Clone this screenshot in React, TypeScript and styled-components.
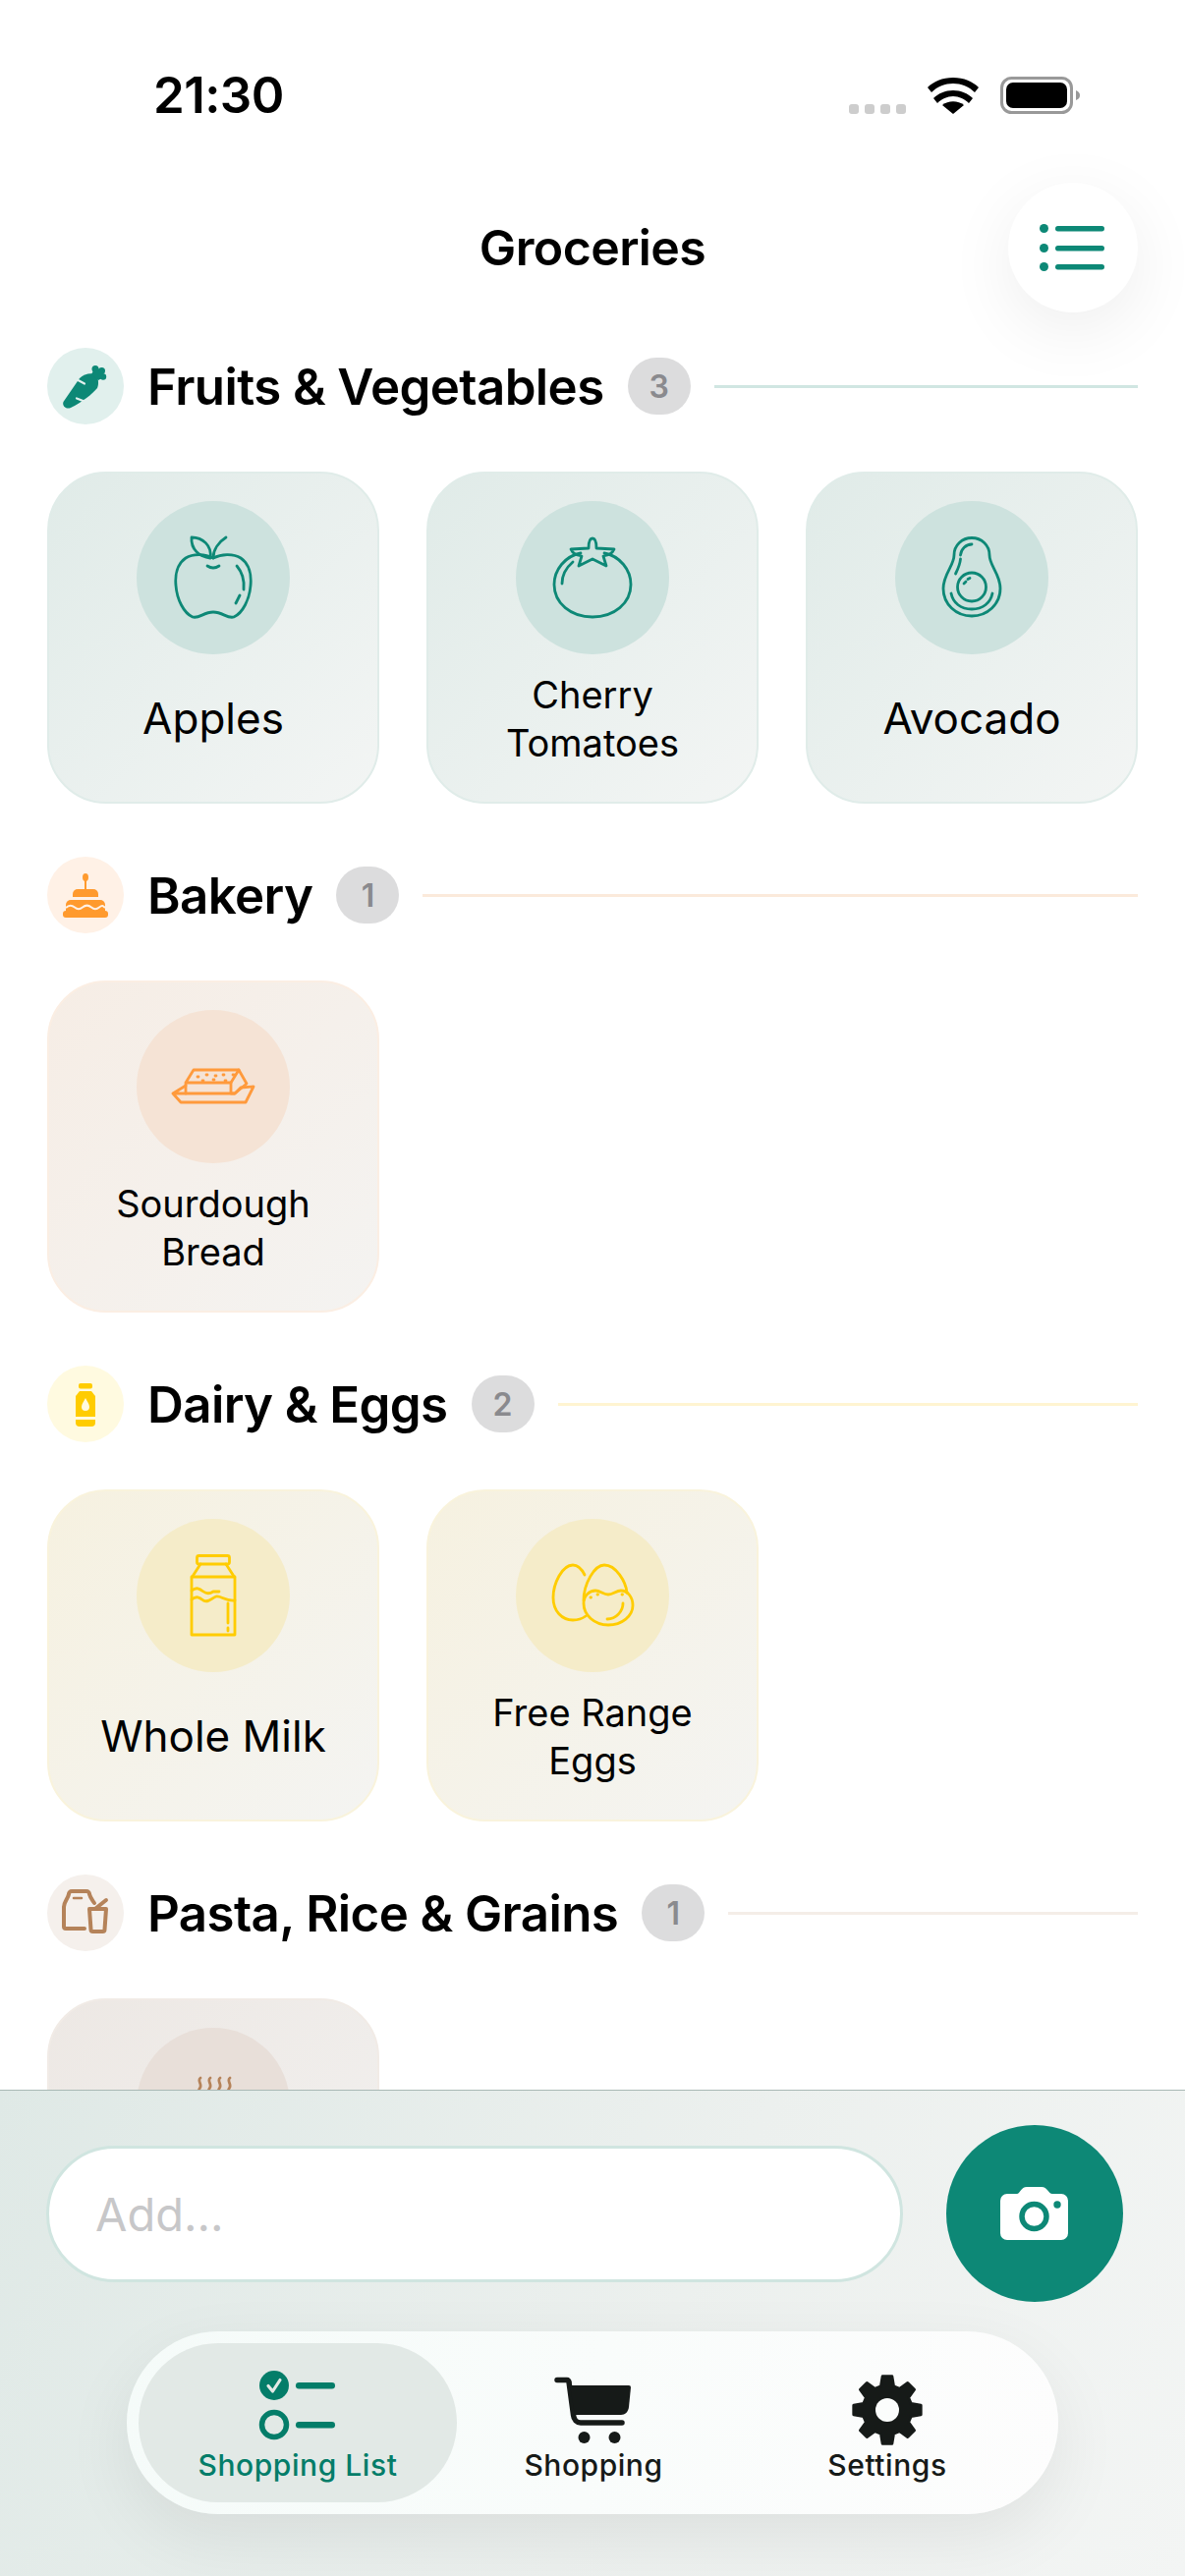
import React from "react";
import styled, { createGlobalStyle } from "styled-components";

const TEAL = "#0d8876";

const Global = createGlobalStyle`
  html, body { margin: 0; padding: 0; background: #fff; }
  body { width: 1206px; height: 2622px; overflow: hidden; font-family: Inter, "Liberation Sans", sans-serif; color: #000; }
  * { box-sizing: border-box; }
`;

const Page = styled.div`
  width: 1206px;
  height: 2622px;
  display: flex;
  flex-direction: column;
  overflow: hidden;
`;
const Scroll = styled.main`
  flex: 1;
  min-height: 0;
  overflow: hidden;
  padding: 0 48px;
`;
const StatusBar = styled.div`
  height: 186px;
  margin: 0 -48px;
  padding: 72px 106px 0 156px;
  display: flex;
  justify-content: space-between;
  align-items: flex-start;
`;
const Time = styled.div`
  font-size: 51px;
  line-height: 50px;
  font-weight: 600;
  letter-spacing: -0.6px;
`;
const StatusIcons = styled.div`
  display: flex;
  align-items: flex-end;
  height: 50px;
  padding-bottom: 6px;
  gap: 22px;
`;
const Dots = styled.div`
  display: flex;
  gap: 6px;
  align-self: flex-end;
`;
const Dot = styled.span`
  width: 10px;
  height: 10px;
  border-radius: 3px;
  background: #cdcdcd;
`;
const Header = styled.header`
  height: 132px;
  display: grid;
  grid-template-columns: 1fr auto 1fr;
  align-items: center;
  margin-bottom: 36px;
`;
const Title = styled.h1`
  grid-column: 2;
  margin: 0;
  font-size: 50px;
  font-weight: 600;
  letter-spacing: -0.6px;
`;
const MenuButton = styled.button`
  grid-column: 3;
  justify-self: end;
  width: 132px;
  height: 132px;
  padding: 0;
  border: 0;
  border-radius: 50%;
  background: #fff;
  box-shadow: 0 18px 70px rgba(0, 0, 0, 0.07);
  display: flex;
  align-items: center;
  justify-content: center;
`;
const Section = styled.section`
  margin-bottom: 54px;
`;
const SectionHead = styled.div`
  height: 78px;
  display: flex;
  align-items: center;
  gap: 24px;
  margin-bottom: 48px;
`;
const HeadIcon = styled.div<{ $bg: string }>`
  width: 78px;
  height: 78px;
  flex: none;
  border-radius: 50%;
  background: ${(p) => p.$bg};
  display: flex;
  align-items: center;
  justify-content: center;
`;
const SectionTitle = styled.h2`
  margin: 0;
  font-size: 51px;
  font-weight: 600;
  letter-spacing: -0.6px;
  white-space: nowrap;
`;
const Badge = styled.span`
  width: 64px;
  height: 58px;
  flex: none;
  border-radius: 29px;
  background: #dcdcdd;
  color: #8a8a8e;
  font-size: 32px;
  font-weight: 600;
  display: flex;
  align-items: center;
  justify-content: center;
`;
const Rule = styled.div<{ $color: string }>`
  flex: 1;
  height: 3px;
  background: ${(p) => p.$color};
`;
const Grid = styled.div`
  display: grid;
  grid-template-columns: repeat(3, 338px);
  gap: 48px;
`;
const Card = styled.div<{ $from: string; $to: string; $border: string }>`
  height: 338px;
  border-radius: 60px;
  border: 2px solid ${(p) => p.$border};
  background: linear-gradient(135deg, ${(p) => p.$from}, ${(p) => p.$to});
  padding-top: 28px;
  padding-bottom: 19px;
  display: flex;
  flex-direction: column;
  align-items: center;
`;
const Bubble = styled.div<{ $bg: string }>`
  width: 156px;
  height: 156px;
  flex: none;
  border-radius: 50%;
  background: ${(p) => p.$bg};
  display: flex;
  align-items: center;
  justify-content: center;
`;
const CardLabel = styled.div<{ $long?: boolean }>`
  flex: 1;
  max-width: 270px;
  display: flex;
  align-items: center;
  justify-content: center;
  text-align: center;
  font-size: ${(p) => (p.$long ? "38px" : "44px")};
  line-height: 49px;
  font-weight: 400;
`;
const Footer = styled.footer`
  height: 495px;
  flex: none;
  border-top: 1.5px solid #a9b9b5;
  background: linear-gradient(115deg, #dfe9e6 0%, #ecf0ee 55%, #f3f5f4 100%);
  padding-top: 35px;
`;
const InputRow = styled.div`
  height: 180px;
  padding-left: 47px;
  display: flex;
  align-items: center;
  gap: 44px;
`;
const AddInput = styled.input`
  width: 872px;
  height: 139px;
  border: 3px solid #d0e5e0;
  border-radius: 70px;
  background: #fff;
  padding: 0 47px;
  font: 400 47px Inter, "Liberation Sans", sans-serif;
  outline: none;
  &::placeholder { color: #c7c7c9; opacity: 1; }
`;
const CameraButton = styled.button`
  width: 180px;
  height: 180px;
  flex: none;
  padding: 0;
  border: 0;
  border-radius: 50%;
  background: ${TEAL};
  display: flex;
  align-items: center;
  justify-content: center;
`;
const TabWrap = styled.div`
  margin-top: 30px;
  display: flex;
  justify-content: center;
`;
const TabBar = styled.nav`
  width: 948px;
  height: 186px;
  border-radius: 93px;
  padding: 12px;
  background: linear-gradient(100deg, #f5fbf9, #fdfdfd);
  box-shadow: 0 24px 70px rgba(0, 0, 0, 0.07);
  display: grid;
  grid-template-columns: 324px 278px 320px;
`;
const Tab = styled.div<{ $active?: boolean }>`
  position: relative;
  border-radius: 81px;
  background: ${(p) => (p.$active ? "#e2e9e6" : "transparent")};
  color: ${(p) => (p.$active ? "#047d69" : "#161a18")};
  display: flex;
  flex-direction: column;
  align-items: center;
`;
const TabIcon = styled.div`
  height: 104px;
  display: flex;
  align-items: flex-end;
  justify-content: center;
`;
const TabLabel = styled.div`
  margin-top: 2px;
  font-size: 30px;
  line-height: 36px;
  font-weight: 500;
  letter-spacing: 0.55px;
`;

const Line = ({ size = 100, children, color }: { size?: number; children: React.ReactNode; color: string }) => (
  <svg width={size} height={size} viewBox="0 0 100 100" fill="none" stroke={color} strokeWidth={2.8} strokeLinecap="round" strokeLinejoin="round">
    {children}
  </svg>
);

const Apple = () => (
  <Line color={TEAL}>
    <path d="M50 30C42 26 30 25 22 30C13 36 11 48 12 58C13 72 20 86 29 90C36 92 40 85 50 85C60 85 64 92 71 90C80 86 87 72 88 58C89 48 87 36 78 30C70 25 58 26 50 30Z" />
    <path d="M47 30C36 29 27 21 28 9C39 9 49 17 47 30Z" />
    <path d="M50 30C50 22 55 14 63 9" />
    <path d="M44 38Q50 42 56 38" />
    <path d="M74 38C80 45 82 52 81 62" />
    <path d="M77 68L73 76" />
  </Line>
);
const Tomato = () => (
  <Line color={TEAL}>
    <path d="M38 25C22 28 11 42 11 57C11 76 28 90 50 90C72 90 89 76 89 57C89 42 78 28 62 25" />
    <path d="M46 20C46 15 47 10 50 10C53 10 54 15 54 20L72 21C70 26 66 27 61 28L64 38L50 31L36 38L39 28C34 27 30 26 28 21Z" />
    <path d="M30 34C23 40 19 47 19 56" />
  </Line>
);
const Avocado = () => (
  <Line color={TEAL}>
    <path d="M50 9.5C60 9.5 68 17 68 27C68 38 79 46 79 61C79 77 66 89 50 89C34 89 21 77 21 61C21 46 32 38 32 27C32 17 40 9.5 50 9.5Z" />
    <circle cx="50" cy="59.5" r="14.5" />
    <path d="M29 66C31 76 39 82 50 82C61 82 69 76 71 66" />
    <path d="M50 16C44 16 39 21 38.5 27" />
    <path d="M38.5 31C38 37 36 41 33.5 46" />
    <path d="M42 56L44 54M46 51.5L48 50.5" />
  </Line>
);
const Bread = () => (
  <Line color="#ff9a3c">
    <path d="M9 57L22 49M9 57L17 66H83L91 50L78 51L72 57H9Z" />
    <path d="M22 57V46L30 33H76L84 47L72 57H68V46H22" />
    <path d="M68 46L76 33" />
    <path d="M34 40h1M43 38h1M52 39h1M60 38h1M70 38h1M39 44h1M50 43h1M62 44h1" />
  </Line>
);
const Milk = () => (
  <Line color="#ffcc00">
    <rect x="33.500" y="9.500" width="33" height="8.500" rx="2" />
    <path d="M37 18L28 32V90H72V32L63 18" />
    <path d="M28 31H72" />
    <path d="M28 45C33 41 36 43 40 46C44 49 47 48 50 46H56" />
    <path d="M28 54C33 50 36 52 40 55C45 58 48 53 53 51C58 50 62 56 72 55" />
    <path d="M65 58V78M65 83V86" />
  </Line>
);
const Eggs = () => (
  <Line color="#ffcc00">
    <path d="M43 71C39 74 35 75 30 75C19 75 10 66 10 52C10 38 19 19 30 19C35 19 39 23 42 29" />
    <path d="M41 55C41 38 52 19 62 19C74 19 84 36 85 47" />
    <path d="M66 80C52 80 41 70 41 58C41 50 47 45 53 45C58 45 61 49 66 49C71 49 74 45 79 45C86 45 91 52 91 60C91 71 80 80 66 80Z" />
    <path d="M81 58C81 66 74 74 65 74" />
    <path d="M48 52h.5M55 49h.5M80 49h.5" />
  </Line>
);
const Steam = () => (
  <Line color="#b5835a">
    <path d="M37 23C33 26 40 30 36 34C34 37 37 38 37 40M47 23C43 26 50 30 46 34C44 37 47 38 47 40M57 23C53 26 60 30 56 34C54 37 57 38 57 40M67 23C63 26 70 30 66 34C64 37 67 38 67 40" />
    <path d="M14 50H86C86 70 70 86 50 86C30 86 14 70 14 50Z" />
  </Line>
);

const HeadCarrot = () => (
  <svg width="78" height="78" viewBox="0 0 78 78">
    <g fill={TEAL}>
      <path d="M16.500 55L33 31C37 27 44 25 49 27C52 30 53 36 51 41C46 47 36 55 24 61C19 63 15 59 16.500 55Z" />
      <circle cx="49" cy="21.500" r="3.500" />
      <circle cx="55.500" cy="23.500" r="3.500" />
      <circle cx="57" cy="29.500" r="3.200" />
      <path d="M45 27L49 20L56 23L58 30L52 33Z" />
    </g>
    <path d="M31.500 33L38 36.500M30 51.500L36.500 54" fill="none" stroke="#e1f0ed" strokeWidth="2.200" strokeLinecap="round" />
  </svg>
);
const HeadCake = () => (
  <svg width="78" height="78" viewBox="0 0 78 78">
    <g fill="#ff9a2e">
      <ellipse cx="39" cy="21" rx="3" ry="4" />
      <rect x="38" y="22" width="2" height="12" />
      <path d="M26 41V38a5 5 0 0 1 5-5H47a5 5 0 0 1 5 5V41Z" />
      <path d="M19 56V49a5 5 0 0 1 5-5H54a5 5 0 0 1 5 5V56Z" />
      <rect x="16" y="55" width="46" height="7" rx="3" />
    </g>
    <path d="M19 52C22 49 25 49 28 51.500S33 54 36 51.500S42 49 45 51.500S50 54 53 51.500S57 50 59 52" fill="none" stroke="#fff1e6" strokeWidth="2" />
  </svg>
);
const HeadBottle = () => (
  <svg width="78" height="78" viewBox="0 0 78 78">
    <g fill="#ffcc00">
      <rect x="32" y="18" width="14" height="5.500" rx="2" />
      <path d="M33 26H45L49 31V52H29V31Z" />
      <path d="M29 55H49V58a4 4 0 0 1-4 4H33a4 4 0 0 1-4-4Z" />
    </g>
    <path d="M39 33C41 37 43 39 43 42a4 4 0 0 1-8 0C35 39 37 37 39 33Z" fill="#fffae0" />
  </svg>
);
const HeadPasta = () => (
  <svg width="78" height="78" viewBox="0 0 78 78" fill="none" stroke="#b5835a" strokeWidth="4" strokeLinecap="round" strokeLinejoin="round">
    <path d="M38 55H19a2 2 0 0 1-2-2V33C17 28 21 25 22 20a3 3 0 0 1 3-3H40a3 3 0 0 1 3 3C44 24 46 26 48 29" />
    <path d="M27 24H35" strokeWidth="2.500" />
    <path d="M43 35H60L58.500 56a2 2 0 0 1-2 2H46.500a2 2 0 0 1-2-2Z" />
    <path d="M50 34L60 26" />
  </svg>
);

const Wifi = () => (
  <svg width="52" height="38" viewBox="0 0 52 38">
    <path d="M26 38L15 29C21 24 31 24 37 29Z" />
    <path d="M26 15C34 15 41 18 46 23L42 28C38 24 32 21 26 21C20 21 14 24 10 28L6 23C11 18 18 15 26 15Z" transform="translate(0 -1)" />
    <path d="M26 1C37 1 46 5 52 11L48 16C42 10 34 7 26 7C18 7 10 10 4 16L0 11C6 5 15 1 26 1Z" />
  </svg>
);
const Battery = () => (
  <svg width="82" height="38" viewBox="0 0 82 38">
    <rect x="1.500" y="1.500" width="71" height="35" rx="10" fill="none" stroke="#999" strokeWidth="3" />
    <rect x="6" y="6" width="62" height="26" rx="7" />
    <path d="M77 14C80 15 81 17 81 19C81 21 80 23 77 24Z" fill="#999" />
  </svg>
);
const ListIcon = () => (
  <svg width="68" height="50" viewBox="0 0 68 50" fill={TEAL}>
    <circle cx="4.500" cy="5.500" r="4.500" /><circle cx="4.500" cy="25.500" r="4.500" /><circle cx="4.500" cy="44.500" r="4.500" />
    <rect x="16" y="3" width="50" height="5.500" rx="2.700" />
    <rect x="16" y="23" width="50" height="5.500" rx="2.700" />
    <rect x="16" y="42" width="50" height="5.500" rx="2.700" />
  </svg>
);
const Camera = () => (
  <svg width="70" height="54" viewBox="0 0 70 54">
    <path d="M7 7H17C20 7 21 0 27 0H42C48 0 49 7 53 7H62a7 7 0 0 1 7 7V47a7 7 0 0 1-7 7H7a7 7 0 0 1-7-7V14a7 7 0 0 1 7-7Z" fill="#fff" />
    <circle cx="34.500" cy="30" r="12.500" fill="none" stroke={TEAL} strokeWidth="5.500" />
    <circle cx="58" cy="18" r="3.700" fill={TEAL} />
  </svg>
);
const Checklist = () => (
  <svg width="80" height="76" viewBox="0 0 80 76">
    <circle cx="16" cy="15" r="15" fill="#047d69" />
    <path d="M10 15.500L14.500 21L22 9.500" fill="none" stroke="#e2e9e6" strokeWidth="3.200" strokeLinecap="round" strokeLinejoin="round" />
    <circle cx="16" cy="55" r="12.500" fill="none" stroke="#047d69" strokeWidth="5.500" />
    <rect x="38" y="12" width="40" height="6.500" rx="3.200" fill="#047d69" />
    <rect x="38" y="52" width="40" height="6.500" rx="3.200" fill="#047d69" />
  </svg>
);
const Cart = () => (
  <svg width="80" height="70" viewBox="0 0 80 70" fill="#161a18">
    <path d="M3 3.500H13C14 3.500 15 4.500 15 5.500L19.500 39C20 44 23 47 27 47H69" fill="none" stroke="#161a18" strokeWidth="5.500" strokeLinecap="round" strokeLinejoin="round" />
    <path d="M16 9H76a2 2 0 0 1 2 2L76 31C75.500 36 72 39 68 39H21Z" />
    <circle cx="30.500" cy="62" r="6" />
    <circle cx="61.500" cy="62" r="6" />
  </svg>
);
const gearPath = (() => {
  const c = 36;
  const pt = (r: number, deg: number) => {
    const a = ((deg - 90) * Math.PI) / 180;
    return `${(c + r * Math.cos(a)).toFixed(2)} ${(c + r * Math.sin(a)).toFixed(2)}`;
  };
  let d = "";
  for (let i = 0; i < 8; i++) {
    const a = i * 45;
    d += `${i === 0 ? "M" : "L"}${pt(25, a - 15)}L${pt(34.5, a - 8)}L${pt(34.5, a + 8)}L${pt(25, a + 15)}`;
  }
  return d + "Z";
})();
const Gear = () => (
  <svg width="72" height="72" viewBox="0 0 72 72">
    <path d={gearPath} fill="#161a18" stroke="#161a18" strokeWidth="3" strokeLinejoin="round" />
    <circle cx="36" cy="36" r="12" fill="#fbfdfc" />
  </svg>
);

type Item = { name: string; long?: boolean; icon: React.ReactNode };
type Group = {
  title: string; count: number; icon: React.ReactNode; headBg: string; rule: string;
  from: string; to: string; border: string; bubble: string; items: Item[];
};

const groups: Group[] = [
  {
    title: "Fruits & Vegetables", count: 3, icon: <HeadCarrot />, headBg: "#e1f0ed", rule: "#d0e6e2",
    from: "#e0ebe8", to: "#f3f5f4", border: "#e0ece9", bubble: "#cde2de",
    items: [
      { name: "Apples", icon: <Apple /> },
      { name: "Cherry Tomatoes", long: true, icon: <Tomato /> },
      { name: "Avocado", icon: <Avocado /> },
    ],
  },
  {
    title: "Bakery", count: 1, icon: <HeadCake />, headBg: "#fff1e6", rule: "#fbeadb",
    from: "#f6ede5", to: "#f4f3f1", border: "#fbeee3", bubble: "#f5e3d5",
    items: [{ name: "Sourdough Bread", long: true, icon: <Bread /> }],
  },
  {
    title: "Dairy & Eggs", count: 2, icon: <HeadBottle />, headBg: "#fffae0", rule: "#fff4d1",
    from: "#f6f1e0", to: "#f4f4f2", border: "#f9f3dc", bubble: "#f5ecc9",
    items: [
      { name: "Whole Milk", icon: <Milk /> },
      { name: "Free Range Eggs", long: true, icon: <Eggs /> },
    ],
  },
  {
    title: "Pasta, Rice & Grains", count: 1, icon: <HeadPasta />, headBg: "#f5f0ec", rule: "#f4ede7",
    from: "#ede8e4", to: "#f2f1f0", border: "#f1ebe6", bubble: "#e8dfd9",
    items: [{ name: "", icon: <Steam /> }],
  },
];

export default function App() {
  return (
    <Page>
      <Global />
      <Scroll>
        <StatusBar>
          <Time>21:30</Time>
          <StatusIcons>
            <Dots><Dot /><Dot /><Dot /><Dot /></Dots>
            <Wifi />
            <Battery />
          </StatusIcons>
        </StatusBar>
        <Header>
          <Title>Groceries</Title>
          <MenuButton aria-label="List"><ListIcon /></MenuButton>
        </Header>
        {groups.map((g) => (
          <Section key={g.title}>
            <SectionHead>
              <HeadIcon $bg={g.headBg}>{g.icon}</HeadIcon>
              <SectionTitle>{g.title}</SectionTitle>
              <Badge>{g.count}</Badge>
              <Rule $color={g.rule} />
            </SectionHead>
            <Grid>
              {g.items.map((it) => (
                <Card key={it.name} $from={g.from} $to={g.to} $border={g.border}>
                  <Bubble $bg={g.bubble}>{it.icon}</Bubble>
                  <CardLabel $long={it.long}>{it.name}</CardLabel>
                </Card>
              ))}
            </Grid>
          </Section>
        ))}
      </Scroll>
      <Footer>
        <InputRow>
          <AddInput placeholder="Add..." />
          <CameraButton aria-label="Camera"><Camera /></CameraButton>
        </InputRow>
        <TabWrap>
          <TabBar>
            <Tab $active>
              <TabIcon><Checklist /></TabIcon>
              <TabLabel>Shopping List</TabLabel>
            </Tab>
            <Tab>
              <TabIcon><Cart /></TabIcon>
              <TabLabel>Shopping</TabLabel>
            </Tab>
            <Tab>
              <TabIcon><Gear /></TabIcon>
              <TabLabel>Settings</TabLabel>
            </Tab>
          </TabBar>
        </TabWrap>
      </Footer>
    </Page>
  );
}
